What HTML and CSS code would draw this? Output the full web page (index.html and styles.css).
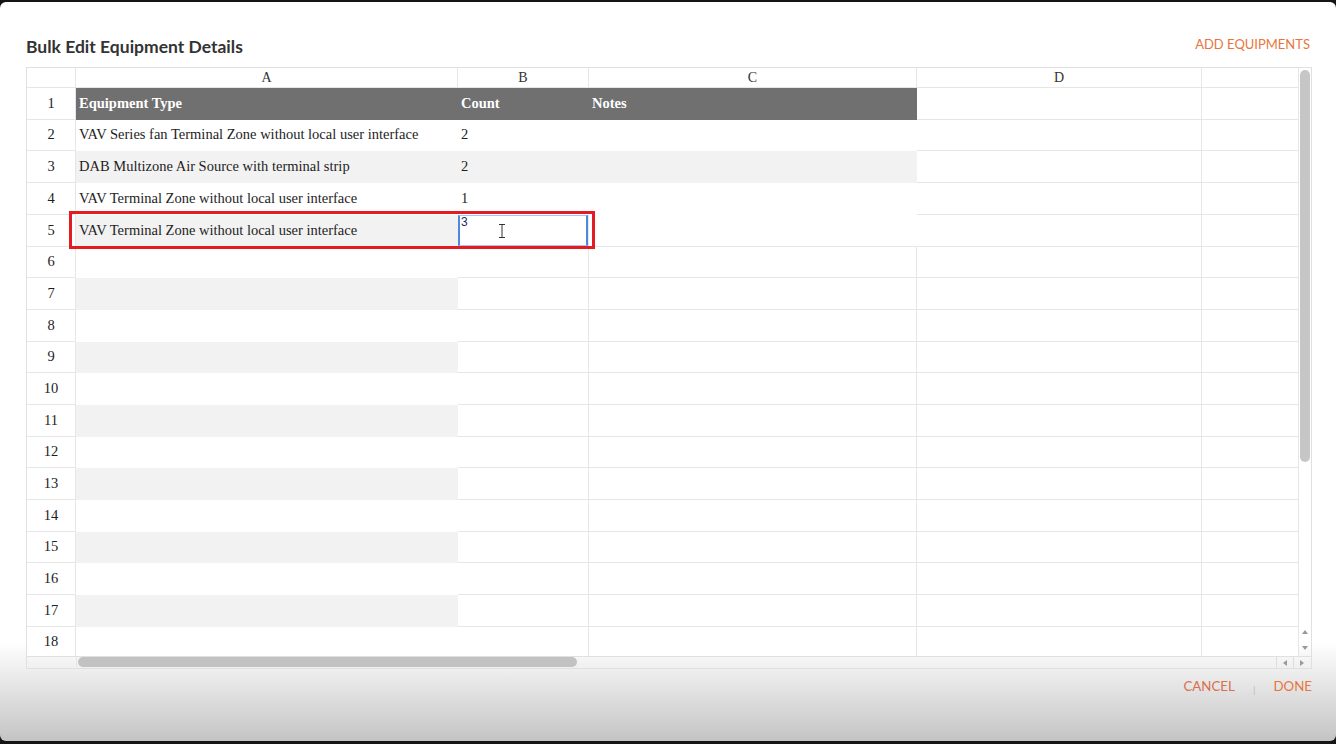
FILE: index.html
```html
<!DOCTYPE html>
<html>
<head lang="en">
    <meta charset="UTF-8">
    <title>Bulk Edit Equipment Details</title>
    <link rel="stylesheet" href="styles.css">
</head>
<body>
<div id="dialog">
    <div class="dlg-head">
        <h2 class="dlg-title">Bulk Edit Equipment Details</h2>
        <a class="link add" href="#">ADD EQUIPMENTS</a>
    </div>

    <div class="sheet">
        <div class="viewport">
            <table class="grid">
                <colgroup>
                    <col class="w-rh">
                    <col class="w-a">
                    <col class="w-b">
                    <col class="w-c">
                    <col class="w-d">
                    <col class="w-e">
                </colgroup>
                <thead>
                    <tr>
                        <th class="rh"></th>
                        <th>A</th>
                        <th>B</th>
                        <th>C</th>
                        <th>D</th>
                        <th></th>
                    </tr>
                </thead>
                <tbody>
                    <tr>
                        <td class="rh">1</td>
                        <td class="hd">Equipment Type</td>
                        <td class="hd">Count</td>
                        <td class="hd">Notes</td>
                        <td></td>
                        <td></td>
                    </tr>
                    <tr>
                        <td class="rh">2</td>
                        <td class="rec">VAV Series fan Terminal Zone without local user interface</td>
                        <td class="rec">2</td>
                        <td class="rec"></td>
                        <td></td>
                        <td></td>
                    </tr>
                    <tr>
                        <td class="rh">3</td>
                        <td class="rec alt">DAB Multizone Air Source with terminal strip</td>
                        <td class="rec alt">2</td>
                        <td class="rec alt"></td>
                        <td></td>
                        <td></td>
                    </tr>
                    <tr>
                        <td class="rh">4</td>
                        <td class="rec">VAV Terminal Zone without local user interface</td>
                        <td class="rec">1</td>
                        <td class="rec"></td>
                        <td></td>
                        <td></td>
                    </tr>
                    <tr>
                        <td class="rh">5</td>
                        <td class="rec alt">VAV Terminal Zone without local user interface</td>
                        <td class="edit-cell">
                            <div class="editor">3
                                <svg class="ibeam" width="8" height="14" viewBox="0 0 8 14">
                                    <path d="M1 0.5h6M1 13.5h6M4 0.5v13" stroke="#333" stroke-width="1" fill="none"/>
                                </svg>
                            </div>
                        </td>
                        <td class="rec last"></td>
                        <td></td>
                        <td></td>
                    </tr>
                    <tr><td class="rh">6</td><td class="ca"></td><td></td><td></td><td></td><td></td></tr>
                    <tr><td class="rh">7</td><td class="ca alt"></td><td></td><td></td><td></td><td></td></tr>
                    <tr><td class="rh">8</td><td class="ca"></td><td></td><td></td><td></td><td></td></tr>
                    <tr><td class="rh">9</td><td class="ca alt"></td><td></td><td></td><td></td><td></td></tr>
                    <tr><td class="rh">10</td><td class="ca"></td><td></td><td></td><td></td><td></td></tr>
                    <tr><td class="rh">11</td><td class="ca alt"></td><td></td><td></td><td></td><td></td></tr>
                    <tr><td class="rh">12</td><td class="ca"></td><td></td><td></td><td></td><td></td></tr>
                    <tr><td class="rh">13</td><td class="ca alt"></td><td></td><td></td><td></td><td></td></tr>
                    <tr><td class="rh">14</td><td class="ca"></td><td></td><td></td><td></td><td></td></tr>
                    <tr><td class="rh">15</td><td class="ca alt"></td><td></td><td></td><td></td><td></td></tr>
                    <tr><td class="rh">16</td><td class="ca"></td><td></td><td></td><td></td><td></td></tr>
                    <tr><td class="rh">17</td><td class="ca alt"></td><td></td><td></td><td></td><td></td></tr>
                    <tr><td class="rh">18</td><td class="ca"></td><td></td><td></td><td></td><td></td></tr>
                </tbody>
            </table>
        </div>

        <!-- vertical scrollbar -->
        <div class="vbar">
            <div class="vthumb"></div>
            <div class="vbtns">
                <span class="sbtn"><svg width="6" height="4" viewBox="0 0 6 4"><polygon points="3,0 6,4 0,4" fill="#999"/></svg></span>
                <span class="sbtn"><svg width="6" height="4" viewBox="0 0 6 4"><polygon points="0,0 6,0 3,4" fill="#999"/></svg></span>
            </div>
        </div>

        <!-- horizontal scrollbar -->
        <div class="hbar">
            <div class="hcorner"></div>
            <div class="htrack">
                <div class="hthumb"></div>
            </div>
            <div class="hbtns">
                <span class="sbtn"><svg width="4" height="6" viewBox="0 0 4 6"><polygon points="0,3 4,0 4,6" fill="#999"/></svg></span>
                <span class="sbtn"><svg width="4" height="6" viewBox="0 0 4 6"><polygon points="0,0 4,3 0,6" fill="#999"/></svg></span>
            </div>
        </div>
    </div>

    <div class="dlg-foot">
        <a class="link cancel" href="#">CANCEL</a>
        <span class="sep">|</span>
        <a class="link" href="#">DONE</a>
    </div>

    <div class="mark"></div>
</div>
</body>
</html>
```

FILE: styles.css
```css
*{
    margin: 0;
    padding: 0;
}
html,body{
    height: 100%;
}
body{
    background: #151515;
    font-family: "Lato", "Liberation Sans", sans-serif;
    overflow: hidden;
}
#dialog{
    position: relative;
    height: 739px;
    margin-top: 2px;
    padding: 0 24px 0 26px;
    box-sizing: border-box;
    border-radius: 6px;
    display: flex;
    flex-direction: column;
    background: linear-gradient(to bottom, #fff 0, #fff 640px, #c4c4c4 739px);
}

/* header */
.dlg-head{
    display: flex;
    justify-content: space-between;
    align-items: flex-start;
    height: 31px;
    padding-top: 34px;
}
.dlg-title{
    font-size: 17.5px;
    font-weight: 700;
    line-height: 22px;
    color: #333;
}
.link{
    font-size: 13px;
    line-height: 16px;
    color: #e8763c;
    text-decoration: none;
}
.add{
    margin-right: 2px;
}

/* sheet frame */
.sheet{
    height: 602px;
    box-sizing: border-box;
    border: 1px solid #e0e0e0;
    display: grid;
    grid-template-columns: 1fr 13px;
    grid-template-rows: 1fr 12px;
}
.viewport{
    overflow: hidden;
}
.grid{
    table-layout: fixed;
    border-collapse: separate;
    border-spacing: 0;
    width: 1375px;
    font-family: "Liberation Serif", serif;
    font-size: 14.5px;
    color: #1e1e1e;
}
.w-rh{ width: 49px; }
.w-a{ width: 382px; }
.w-b{ width: 131px; }
.w-c{ width: 328px; }
.w-d{ width: 285px; }
.w-e{ width: 200px; }

.grid th,
.grid td{
    box-sizing: border-box;
    border-right: 1px solid #e6e6e6;
    border-bottom: 1px solid #e6e6e6;
    white-space: nowrap;
    overflow: hidden;
}
.grid th{
    height: 20px;
    font-weight: normal;
    font-size: 14px;
    color: #333;
    text-align: center;
    background: #fff;
}
.grid tbody tr{
    height: 31.67px;
}
.grid td{
    padding: 0 4px 0 3px;
    background: #fff;
}
.grid td.rh{
    padding: 0;
    text-align: center;
}
.grid td.hd{
    background: #707070;
    color: #fff;
    font-weight: bold;
    border-color: #707070;
}
.grid td.rec,
.grid td.ca{
    border-color: transparent;
}
.grid td.alt{
    background: #f2f2f2;
}
.grid td.rec.last{
    border-bottom-color: #e6e6e6;
}

/* cell being edited */
.grid td.edit-cell{
    padding: 0;
    vertical-align: top;
    border-right: 1px solid #e6e6e6;
}
.editor{
    position: relative;
    height: 31px;
    box-sizing: border-box;
    border: 1px solid #a9c5ee;
    border-left: 2px solid #4f88de;
    border-right: 2px solid #4f88de;
    padding-left: 1px;
    font-family: "Liberation Sans", sans-serif;
    font-size: 12px;
    line-height: 12px;
    color: #1c2a66;
}
.ibeam{
    position: absolute;
    left: 38px;
    top: 8px;
}

/* scrollbars */
.vbar{
    border-left: 1px solid #e6e6e6;
    display: flex;
    flex-direction: column;
    justify-content: space-between;
}
.vthumb{
    height: 392px;
    margin: 2px 1px 0 1px;
    background: #c6c6c6;
    border-radius: 6px;
}
.vbtns{
    display: flex;
    flex-direction: column;
}
.sbtn{
    display: flex;
    align-items: center;
    justify-content: center;
    width: 12px;
    height: 16px;
}
.hbar{
    grid-column: 1 / 3;
    display: flex;
    border-top: 1px solid #e0e0e0;
}
.hcorner{
    width: 49px;
    border-right: 1px solid #e6e6e6;
}
.htrack{
    flex: 1;
}
.hthumb{
    width: 499px;
    height: 10px;
    margin: 0 0 0 1px;
    background: #c2c2c2;
    border-radius: 5px;
}
.hbtns{
    display: flex;
    margin-right: 1px;
}
.hbtns .sbtn{
    width: 16px;
    height: 11px;
    border-left: 1px solid #ddd;
}

/* footer */
.dlg-foot{
    display: flex;
    justify-content: flex-end;
    align-items: flex-start;
    padding-top: 9px;
}
.dlg-foot .link{
    font-size: 13.3px;
}
.cancel{
    color: #d96f4a;
}
.sep{
    margin: 5px 18px 0 18px;
    font-size: 10px;
    line-height: 12px;
    color: #bcbcbc;
}

/* red outline around the edited record */
.mark{
    position: absolute;
    left: 69px;
    top: 209px;
    width: 526px;
    height: 38px;
    box-sizing: border-box;
    border: 3px solid #e31b23;
    pointer-events: none;
}
```
